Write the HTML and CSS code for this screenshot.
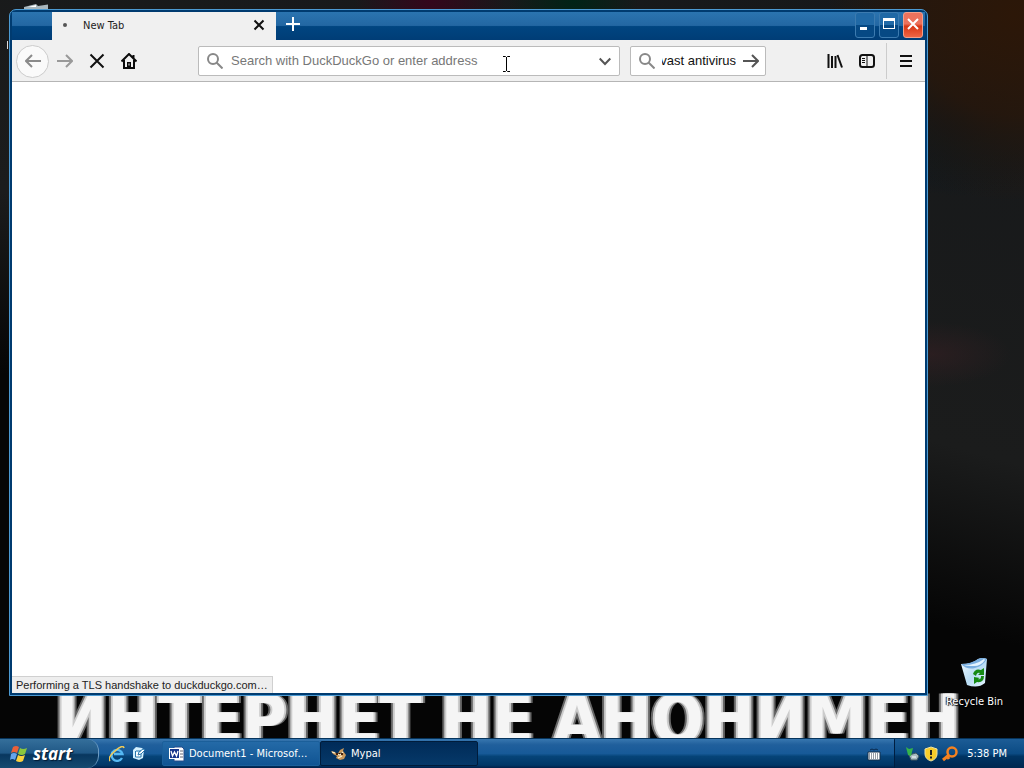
FILE: index.html
```
<!DOCTYPE html>
<html lang="en">
<head>
<meta charset="utf-8">
<title>Desktop</title>
<link rel="stylesheet" href="styles.css">
</head>
<body>
<main class="desktop">
  <svg class="wall-marks" viewBox="0 0 48 60" aria-hidden="true"><path d="M24 7l12-3 2 2 14-2v6H24z" fill="#a9b6bc"/><path d="M28 7l8-2v2z" fill="#fff"/><path d="M7 41h1v8H7z" fill="#ddd"/></svg>
  <div class="banner" lang="ru"><span>ИНТЕРНЕТ</span><span>НЕ</span><span>АНОНИМЕН</span></div>

  <a class="shortcut" href="#recycle">
    <svg viewBox="0 0 32 34" aria-hidden="true">
      <defs><linearGradient id="bin" x1="0" y1="0" x2="1" y2="1"><stop offset="0" stop-color="#f4fbff"/><stop offset=".55" stop-color="#b9ddf5"/><stop offset="1" stop-color="#e8f6ff"/></linearGradient></defs>
      <path d="M3 8q12 0 17-5 5-2 9 0l-2 24q-7 6-18 2Z" fill="url(#bin)"/>
      <path d="M3 8q10 0 17-5 5-2 9 0-4 7-12 9T3 8Z" fill="#79aee0"/>
      <path d="M6 9q12 0 20-6l1 1q-4 6-11 6T6 9Z" fill="#e4f4ff"/>
      <path d="M15 18q2-6 8-4l3-2v7h-6l2-2q-3-1-4 3ZM26 20q0 7-7 6l-3 2v-7l6 1-2 1q3 1 3-3Z" fill="#168a14"/>
    </svg>
    <span>Recycle Bin</span>
  </a>

  <section class="window" aria-label="Mypal">
    <header class="titlebar">
      <div class="tab">
        <span class="tab-dot"></span>
        <span class="tab-title">New Tab</span>
        <button class="plain tab-close" aria-label="Close tab"><svg viewBox="0 0 12 12"><path d="M1.500 1.500l9 9M10.500 1.500l-9 9" stroke="#111" stroke-width="2"/></svg></button>
      </div>
      <button class="plain new-tab" aria-label="New tab"><svg viewBox="0 0 14 14"><path d="M7 0v14M0 7h14" stroke="#fff" stroke-width="2"/></svg></button>
      <div class="controls">
        <button class="control" aria-label="Minimize"><svg viewBox="0 0 18 24"><path d="M4 14h7v3H4z" fill="#fff"/></svg></button>
        <button class="control" aria-label="Maximize"><svg viewBox="0 0 18 24"><path d="M3 5h12v11H3z M4 8v7h10V8z" fill="#fff" fill-rule="evenodd"/></svg></button>
        <button class="control control-close" aria-label="Close"><svg viewBox="0 0 18 24"><path d="M4 6l10 10M14 6L4 16" stroke="#fff" stroke-width="2"/></svg></button>
      </div>
    </header>

    <nav class="toolbar">
      <button class="plain back" aria-label="Back"><svg viewBox="0 0 16 16"><path d="M16 8H1M7 2L1 8l6 6" fill="none" stroke="#8a8a8a" stroke-width="2"/></svg></button>
      <button class="plain tool" aria-label="Forward"><svg viewBox="0 0 16 16"><path d="M0 8h15M9 2l6 6-6 6" fill="none" stroke="#999" stroke-width="2"/></svg></button>
      <button class="plain tool" aria-label="Stop"><svg viewBox="0 0 16 16"><path d="M1.500 1.500l13 13M14.500 1.500l-13 13" stroke="#111" stroke-width="2"/></svg></button>
      <button class="plain tool" aria-label="Home"><svg viewBox="0 0 16 16"><path d="M.5 8.500L8 1l7.500 7.500M3 7v8h10V7M12.500 2v3" fill="none" stroke="#0b0b0b" stroke-width="2"/><path d="M6 9h4v6H6z" fill="#0b0b0b"/><path d="M7.500 10.500h1v2h-1z" fill="#eee"/></svg></button>
      <div class="field address">
        <svg viewBox="0 0 16 16"><circle cx="6" cy="6" r="5" fill="none" stroke="#888" stroke-width="2"/><path d="M9.500 9.500l6 6" stroke="#888" stroke-width="2"/></svg>
        <input type="text" aria-label="Address" placeholder="Search with DuckDuckGo or enter address">
        <button class="plain" aria-label="History"><svg class="chevron" viewBox="0 0 12 12"><path d="M.7 3.500L6 9l5.300-5.500" fill="none" stroke="#555" stroke-width="2"/></svg></button>
      </div>
      <div class="field search">
        <svg viewBox="0 0 16 16"><circle cx="6" cy="6" r="5" fill="none" stroke="#888" stroke-width="2"/><path d="M9.500 9.500l6 6" stroke="#888" stroke-width="2"/></svg>
        <input type="text" id="search" aria-label="Search" value="avast antivirus">
        <button class="plain" aria-label="Go"><svg viewBox="0 0 16 16"><path d="M0 8h15M9 2l6 6-6 6" fill="none" stroke="#555" stroke-width="2"/></svg></button>
      </div>
      <div class="tools-end">
        <button class="plain tool" aria-label="Library"><svg viewBox="0 0 16 16"><path d="M1.500 1v14M5 3v12M8.500 3v12M10.500 2l4.500 12.500" stroke="#111" stroke-width="2"/></svg></button>
        <button class="plain tool" aria-label="Sidebars"><svg viewBox="0 0 16 16"><rect x="1" y="2" width="14" height="12" rx="2.500" fill="none" stroke="#111" stroke-width="2"/><path d="M8 2v12M3 5.500h3M3 7.500h3M3 9.500h3" stroke="#111"/></svg></button>
        <button class="plain tool menu" aria-label="Menu"><svg viewBox="0 0 16 16"><path d="M2 3h12M2 8h12M2 13h12" stroke="#111" stroke-width="2"/></svg></button>
      </div>
    </nav>

    <div class="page"><div class="status">Performing a TLS handshake to duckduckgo.com…</div></div>
  </section>
  <svg class="pointer" viewBox="0 0 9 16" aria-hidden="true"><path d="M1 .5h2.500l1 1 1-1H8M1 15.500h2.500l1-1 1 1H8M4.500 1v14" fill="none" stroke="#000"/></svg>
</main>

<footer class="taskbar">
  <button class="start">
    <svg viewBox="0 0 18 18" aria-hidden="true"><path d="M3 2q3-2 6 0L7 8Q4 6 1 8Z" fill="#ec6038"/><path d="M10 3q3 2 7 0l-2 6q-3 2-7 0Z" fill="#8bc63d"/><path d="M1 9q3-2 6 0l-2 6q-3-2-5 0Z" fill="#65a4ee"/><path d="M8 10q3 2 7 0l-2 6q-3 2-7 0Z" fill="#fbd13c"/></svg>
    <span>start</span>
  </button>
  <div class="quick">
    <button class="plain" aria-label="Internet Explorer"><svg viewBox="0 0 16 16"><path d="M13 12A5.500 5.500 0 1 1 13.500 8H5" fill="none" stroke="#55b9f4" stroke-width="2.300"/><path d="M1 15Q-2 12 6 5T15 2" fill="none" stroke="#f4cb55" stroke-width="1.600"/></svg></button>
    <button class="plain" aria-label="Show desktop"><svg viewBox="0 0 16 16"><path d="M2 4l3-3 6 1 2 2-1 8-4 2-6-2Z" fill="#d5f1ff"/><path d="M5 5h5M4.500 5v6H10V8M7 9l1-3 4-3 2 1-4 4Z" fill="#fff" stroke="#2877ae"/></svg></button>
  </div>
  <div class="tasks">
    <button class="task">
      <svg viewBox="0 0 16 16" aria-hidden="true"><path d="M5 1h8l2 2v12H5z" fill="#fff" stroke="#244a8a"/><path d="M11 5h3M11 8h3M11 11h3" stroke="#667"/><path d="M0 2h11v11H0z" fill="#fff"/><path d="M1 3h9v9H1z" fill="#17368c"/><path d="M2 5l1.500 5 2-4 2 4L9 5" fill="none" stroke="#fff" stroke-width="1.300"/></svg>
      <span>Document1 - Microsoft Word</span>
    </button>
    <button class="task active">
      <svg viewBox="0 0 16 16" aria-hidden="true"><path d="M0 5l4 1 2 3 3-5 4-2-1 3 3 4-2 4-4 1-4-2 1-2-4-2Z" fill="#c9985b"/><path d="M1 6l3 1M6 8l3 1 3-3M7 12l4-2" stroke="#fff0cc" stroke-width="1.300"/><path d="M5 7h2v2H5zM10 7h2v2h-2z" fill="#49240e"/></svg>
      <span>Mypal</span>
    </button>
  </div>
  <button class="plain keyboard" aria-label="Keyboard"><svg viewBox="0 0 14 14"><path d="M3 3l2-1 2 1 2-1 2 1" fill="none" stroke="#0a294c"/><path d="M1 5h12v8H1z" fill="#fff" stroke="#122e4b"/><path d="M2 7h10M2 9h10M2 11h10" stroke="#28394a" stroke-dasharray="1 1"/></svg></button>
  <div class="tray">
    <svg viewBox="0 0 16 16" role="img" aria-label="Safely remove hardware"><path d="M5 9l7-2 3 3-2 4H7Z" fill="#a9bbc0" stroke="#405761"/><path d="M8 11h4" stroke="#fff"/><path d="M2 1l3 2 4-1-1 4-1 4-3-1Z" fill="#35b34a"/></svg>
    <svg viewBox="0 0 16 16" role="img" aria-label="Security alert"><path d="M8 1l6 2v5q0 5-6 7-6-2-6-7V3Z" fill="#f8cd2a" stroke="#eee2a0"/><path d="M8 4v5M8 10.500v2" stroke="#222" stroke-width="2"/></svg>
    <svg viewBox="0 0 16 16" role="img" aria-label="Search"><circle cx="10" cy="6" r="4.500" fill="none" stroke="#f58220" stroke-width="2.500"/><path d="M7 9l-6 5M5 10l2 3" stroke="#f58220" stroke-width="3"/></svg>
    <time>5:38 PM</time>
  </div>
</footer>
<script src="app.js"></script>
</body>
</html>
```
FILE: app.js
```
const search = document.getElementById('search');
search.scrollLeft = search.scrollWidth;
```
FILE: styles.css
```
* { box-sizing: border-box; }
body {
  margin: 0;
  height: 100vh;
  display: flex;
  flex-direction: column;
  overflow: hidden;
  background: #060606;
  font-family: "DejaVu Sans Condensed", "DejaVu Sans", sans-serif;
  font-size: 11px;
}
button, input { font: inherit; }
svg { display: block; width: 16px; height: 16px; flex: none; }
.plain {
  display: grid;
  place-items: center;
  padding: 0;
  border: 0;
  background: none;
}
.desktop {
  position: relative;
  flex: 1;
  overflow: hidden;
  background:
    radial-gradient(circle at 99% 2%, #2c1708 0, #2a170acc 8%, transparent 15%),
    radial-gradient(ellipse at 91% 48%, #38202488 0, transparent 6%),
    radial-gradient(ellipse at 94% 16%, #08161e 0, transparent 9%),
    radial-gradient(circle at 56% 0, #002316 0, transparent 7%),
    radial-gradient(circle at 42% 0, #34061b 0, transparent 8%),
    linear-gradient(15deg, #050505 36%, #1b1c1c 54%, #16181a 100%);
}
.wall-marks { position: absolute; left: 0; top: 0; width: 48px; height: 60px; }

.banner {
  position: absolute;
  left: 56px;
  right: 64px;
  bottom: -12px;
  display: flex;
  justify-content: space-between;
  color: #f5f5f5;
  font-size: 68px;
  line-height: 60px;
  font-weight: 700;
  text-shadow: 2px 0 #ccc, -2px 0 #ccc, 4px 0 #666, -4px 0 #666;
}

.window {
  position: absolute;
  inset: 9px 96px 42px 9px;
  display: flex;
  flex-direction: column;
  padding: 2px;
  border: 1px solid #4c9ad2;
  border-radius: 7px 7px 0 0;
  background: #003b70;
}
.titlebar {
  display: flex;
  height: 28px;
  padding-left: 40px;
  background: linear-gradient(#2b74b0, #2367a3 48%, #004581 52%, #003d76);
}
.tab {
  display: flex;
  align-items: center;
  width: 224px;
  padding: 0 11px 2px;
  background: #f0f0f0;
}
.tab-dot { width: 4px; height: 4px; border-radius: 2px; background: #555; }
.tab-title { flex: 1; padding-left: 16px; color: #222; }
.tab-close svg { width: 12px; height: 12px; }
.new-tab { width: 34px; padding-bottom: 4px; }
.new-tab svg { width: 14px; height: 14px; }
.controls { display: flex; gap: 4px; margin-left: auto; padding-right: 2px; }
.control {
  width: 20px;
  height: 26px;
  padding: 0;
  border: 1px solid #3c7bb0;
  border-radius: 3px;
  background: linear-gradient(#2069a6 50%, #064984 52%);
}
.control svg { width: 18px; height: 24px; }
.control-close { border-color: #f2a08b; background: linear-gradient(#ed725d 45%, #d83715 55%, #ee6545); }

.toolbar {
  display: flex;
  align-items: center;
  height: 42px;
  padding: 1px 0 0 4px;
  border-bottom: 1px solid #b5b5b5;
  background: #f0f0f0;
}
.tool { width: 32px; height: 32px; }
.back { width: 33px; height: 33px; border: 1px solid #ccc; border-radius: 50%; background: #fafafa; }
.field {
  display: flex;
  align-items: center;
  height: 30px;
  padding: 0 6px 0 8px;
  border: 1px solid #bbb;
  border-radius: 2px;
  background: #fff;
}
.field input {
  flex: 1;
  min-width: 0;
  padding: 0;
  border: 0;
  outline: 0;
  background: none;
  color: #111;
  font: 13px/18px "Liberation Sans", Arial, sans-serif;
}
.field input::placeholder { color: #777; opacity: 1; }
.address { flex: 1; margin-left: 53px; gap: 8px; padding-right: 8px; }
.address .chevron { width: 12px; height: 12px; }
.search { width: 136px; margin-left: 10px; gap: 7px; }
.tools-end { display: flex; align-items: center; margin-left: 53px; }
.menu { width: 39px; height: 36px; margin-left: 3px; border-left: 1px solid #ccc; }

.page { flex: 1; display: flex; align-items: flex-end; background: #fff; }
.status {
  height: 17px;
  padding: 0 4px;
  border: 1px solid #d0d0d0;
  border-width: 1px 1px 0 0;
  background: #eee;
  color: #222;
  font-family: "Liberation Sans", Arial, sans-serif;
  line-height: 17px;
  white-space: nowrap;
}
.pointer { position: absolute; left: 502px; top: 56px; width: 9px; height: 16px; }

.shortcut {
  position: absolute;
  right: 21px;
  bottom: 30px;
  display: flex;
  flex-direction: column;
  align-items: center;
  gap: 5px;
  color: #fff;
  text-decoration: none;
  text-shadow: 1px 1px 1px #000, -1px 0 1px #000;
}
.shortcut svg { width: 32px; height: 34px; }

.taskbar {
  display: flex;
  height: 30px;
  border-top: 1px solid #06345c;
  background: linear-gradient(#3877af, #205f9c 20%, #175a98 50%, #064478 60%, #003767 90%, #001f49);
  color: #fff;
}
.start {
  display: flex;
  align-items: center;
  gap: 5px;
  width: 99px;
  padding: 0 10px;
  border: 0;
  border-right: 1px solid #6c9bc2;
  border-radius: 0 12px 12px 0;
  background: linear-gradient(#356f9b, #205886 48%, #08375f 54%, #164a70);
  color: #fff;
  font: italic bold 17px/20px "Open Sans", sans-serif;
  text-shadow: 1px 1px 1px #001a33;
}
.start svg { width: 18px; height: 18px; }
.quick { display: flex; gap: 6px; padding-left: 10px; }
.tasks { display: flex; flex: 1; align-items: center; margin-left: 15px; }
.task {
  display: flex;
  align-items: center;
  gap: 4px;
  width: 158px;
  height: 25px;
  padding: 0 8px 0 6px;
  border: 1px solid #1b5f9a;
  border-radius: 2px;
  background: linear-gradient(#246aa7, #105493);
  color: #fff;
  white-space: nowrap;
}
.task span { overflow: hidden; text-overflow: ellipsis; }
.task.active { border-color: #001c3b; background: linear-gradient(#002b58, #063969); padding-left: 10px; }
.keyboard { margin-right: 13px; }
.keyboard svg { width: 14px; height: 14px; }
.tray {
  display: flex;
  align-items: center;
  gap: 3px;
  padding: 0 17px 0 9px;
  border-left: 1px solid #001e40;
  background: linear-gradient(#1c5c96, #0b4b84 50%, #003463 60%, #00274f);
}
.tray time { padding-left: 6px; }
```
